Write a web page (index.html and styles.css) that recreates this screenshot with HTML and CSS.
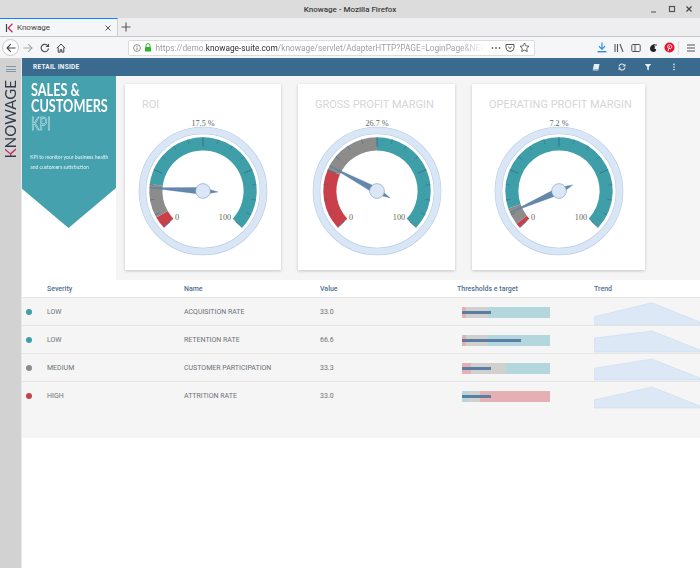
FILE: index.html
```html
<!DOCTYPE html>
<html>
<head>
    <title>Knowage - Mozilla Firefox</title>
    <link rel="stylesheet" href="styles.css">
</head>
<body>
    <div class="titlebar">
        <span class="titlebar-text">Knowage - Mozilla Firefox</span>
        <div class="window-buttons">
            <svg width="10" height="10" viewBox="0 0 10 10"><path d="M2 8h5" stroke="#666" stroke-width="1.2"/></svg>
            <svg width="10" height="10" viewBox="0 0 10 10"><rect x="2.5" y="2.5" width="5" height="5" fill="none" stroke="#555" stroke-width="1.2"/></svg>
            <svg width="10" height="10" viewBox="0 0 10 10"><path d="M2.5 2.5l5 5M7.5 2.5l-5 5" stroke="#444" stroke-width="1.2"/></svg>
        </div>
    </div>

    <div class="tabbar">
        <div class="tab">
            <svg class="favicon" width="9" height="10" viewBox="0 0 9 10"><path d="M1.5 1v8" stroke="#3a4658" stroke-width="1.2"/><path d="M7.5 .8L3.2 5l4.3 4.2" fill="none" stroke="#d0245f" stroke-width="1.2"/></svg>
            <span class="tab-title">Knowage</span>
            <svg width="8" height="8" viewBox="0 0 8 8"><path d="M1.5 1.5l5 5M6.5 1.5l-5 5" stroke="#555" stroke-width="1"/></svg>
        </div>
        <svg class="new-tab" width="10" height="10" viewBox="0 0 10 10"><path d="M5 .5v9M.5 5h9" stroke="#555" stroke-width="1.1"/></svg>
    </div>

    <div class="navbar">
        <div class="back-button">
            <svg width="10" height="10" viewBox="0 0 10 10"><path d="M9.5 5H1M4.8 1.2L1 5l3.8 3.8" fill="none" stroke="#444" stroke-width="1.1"/></svg>
        </div>
        <svg class="nav-icon" width="10" height="10" viewBox="0 0 10 10"><path d="M.5 5H9M5.2 1.2L9 5 5.2 8.8" fill="none" stroke="#aaa" stroke-width="1.1"/></svg>
        <svg class="nav-icon" width="10" height="10" viewBox="0 0 10 10"><path d="M8.5 5.5A3.7 3.7 0 1 1 7 2" fill="none" stroke="#444" stroke-width="1.1"/><path d="M9 .5v3.5H5.5z" fill="#444"/></svg>
        <svg class="nav-icon" width="10" height="10" viewBox="0 0 10 10"><path d="M.8 5.2L5 1l4.2 4.2M2.2 4.5v4.7h2v-2.5h1.6v2.5h2V4.5" fill="none" stroke="#444" stroke-width="1"/></svg>

        <div class="urlbar">
            <svg width="8" height="8" viewBox="0 0 8 8"><circle cx="4" cy="4" r="3.4" fill="none" stroke="#777" stroke-width=".8"/><path d="M4 3.4v2.6M4 1.8v.9" stroke="#777" stroke-width=".9"/></svg>
            <svg class="lock" width="8" height="9" viewBox="0 0 8 9"><path d="M2 4V2.6a2 2 0 0 1 4 0V4" fill="none" stroke="#2bb52b" stroke-width="1"/><rect x="1" y="4" width="6" height="4.6" rx=".6" fill="#2bb52b"/></svg>
            <div class="url-text">https://demo.<b>knowage-suite.com</b>/knowage/servlet/AdapterHTTP?PAGE=LoginPage&amp;NEW</div>
            <svg class="url-dots" width="10" height="4" viewBox="0 0 10 4"><circle cx="1.4" cy="2" r=".9" fill="#666"/><circle cx="5" cy="2" r=".9" fill="#666"/><circle cx="8.6" cy="2" r=".9" fill="#666"/></svg>
            <svg width="10" height="10" viewBox="0 0 10 10"><path d="M1 1.5h8v3a4 4 0 0 1-8 0z" fill="none" stroke="#555" stroke-width="1"/><path d="M3.2 3.8L5 5.5l1.8-1.7" fill="none" stroke="#555" stroke-width="1"/></svg>
            <svg width="11" height="11" viewBox="0 0 11 11"><path d="M5.5 1l1.4 2.9 3.1.4-2.3 2.2.6 3.1-2.8-1.5-2.8 1.5.6-3.1L1 4.3l3.1-.4z" fill="none" stroke="#555" stroke-width=".9"/></svg>
        </div>

        <div class="nav-right">
            <svg width="10" height="11" viewBox="0 0 10 11"><path d="M5 .5v6.5M2 4.3L5 7.2l3-2.9" fill="none" stroke="#2a90f0" stroke-width="1.2"/><path d="M.5 9.7h9" stroke="#2a90f0" stroke-width="1.4"/></svg>
            <svg width="10" height="10" viewBox="0 0 10 10"><path d="M1 1v8M3.5 1v8M6 1l3 8" fill="none" stroke="#555" stroke-width="1.1"/></svg>
            <svg width="10" height="10" viewBox="0 0 10 10"><rect x=".8" y="1.5" width="8.4" height="7" rx="1" fill="none" stroke="#555" stroke-width="1"/><path d="M4 1.5v7" stroke="#555" stroke-width="1"/></svg>
            <svg width="10" height="10" viewBox="0 0 10 10"><path d="M7.5 1.2C4.5 1 2 3 2 5.6 2 7.8 3.6 9 5.4 9c1.9 0 2.8-1.4 2.8-2.8L6.3 5.5 7.2 3.8 6.2 3z" fill="#222"/><circle cx="8" cy="2" r=".8" fill="#222"/></svg>
            <svg class="pin-icon" width="11" height="11" viewBox="0 0 11 11"><circle cx="5.5" cy="5.5" r="5" fill="#e8112d"/><path d="M4 9.2L5.4 4M3.6 5.6C3 3.8 4.3 2.8 5.7 2.8c1.5 0 2.3 1 2.1 2.3-.2 1.3-1.5 2-2.6 1.3" fill="none" stroke="#fff" stroke-width=".9"/></svg>
            <span class="nav-divider"></span>
            <svg width="10" height="10" viewBox="0 0 10 10"><path d="M1 2h8M1 5h8M1 8h8" stroke="#555" stroke-width="1"/></svg>
        </div>
    </div>

    <div class="app">
        <aside class="sidebar">
            <div class="burger"><span></span><span></span><span></span></div>
            <div class="brand"><span class="brand-k">K</span>NOWAGE</div>
        </aside>

        <main class="content">
            <header class="appbar">
                <span class="appbar-title">RETAIL INSIDE</span>
                <div class="appbar-icons">
                    <svg width="8" height="8" viewBox="0 0 8 8"><path d="M2 1h5.5L6.5 6.5H.8z" fill="#e6edf3"/><path d="M.8 6.5h5.7V7.6H.8z" fill="#b9c8d6"/></svg>
                    <svg width="8" height="8" viewBox="0 0 8 8"><path d="M1 3.4A3 3 0 0 1 6.4 2.3M7 4.6A3 3 0 0 1 1.6 5.7" fill="none" stroke="#e6edf3" stroke-width="1.1"/><path d="M7.4 .8v2.6H4.8zM.6 7.2V4.6h2.6z" fill="#e6edf3"/></svg>
                    <svg width="8" height="8" viewBox="0 0 8 8"><path d="M.8 1h6.4L4.8 4v3.4L3.2 6.4V4z" fill="#e6edf3"/></svg>
                    <svg width="8" height="8" viewBox="0 0 8 8"><circle cx="4" cy="1.4" r=".8" fill="#e6edf3"/><circle cx="4" cy="4" r=".8" fill="#e6edf3"/><circle cx="4" cy="6.6" r=".8" fill="#e6edf3"/></svg>
                </div>
            </header>

            <section class="dashboard">
                <div class="banner">
                    <div class="banner-inner">
                        <h1 class="banner-title">SALES &amp;<br>CUSTOMERS</h1>
                        <div class="banner-kpi">KPI</div>
                        <p class="banner-text">KPI to monitor your business health<br>and customers satisfaction</p>
                    </div>
                </div>
                <div class="gauges">
                    <div class="card card-roi">
                        <div class="card-title">ROI</div>
                        <svg class="gauge" width="150" height="150" viewBox="0 0 150 150" data-value="17.5" data-red="5" data-gray="19"></svg>
                    </div>
                    <div class="card card-gross">
                        <div class="card-title">GROSS PROFIT MARGIN</div>
                        <svg class="gauge" width="150" height="150" viewBox="0 0 150 150" data-value="26.7" data-red="25" data-gray="50"></svg>
                    </div>
                    <div class="card card-operating">
                        <div class="card-title">OPERATING PROFIT MARGIN</div>
                        <svg class="gauge" width="150" height="150" viewBox="0 0 150 150" data-value="7.2" data-red="2" data-gray="9"></svg>
                    </div>
                </div>
            </section>

            <section class="kpi-table">
                <div class="kpi-row kpi-head">
                    <span></span>
                    <span>Severity</span>
                    <span>Name</span>
                    <span>Value</span>
                    <span>Thresholds e target</span>
                    <span>Trend</span>
                </div>

                <div class="kpi-row">
                    <span class="dot dot-low"></span>
                    <span>LOW</span>
                    <span>ACQUISITION RATE</span>
                    <span>33.0</span>
                    <div class="bullet">
                        <i class="seg-red" style="width: 5%"></i><i class="seg-gray" style="width: 24%"></i><i class="seg-teal" style="width: 71%"></i>
                        <b class="measure" style="width: 33%"></b>
                    </div>
                    <svg class="spark" width="106" height="28" viewBox="0 0 106 28"><path d="M0 26.7V18.7L58 4.7 106 24V26.7z"/></svg>
                </div>

                <div class="kpi-row">
                    <span class="dot dot-low"></span>
                    <span>LOW</span>
                    <span>RETENTION RATE</span>
                    <span>66.6</span>
                    <div class="bullet">
                        <i class="seg-red" style="width: 5%"></i><i class="seg-gray" style="width: 24%"></i><i class="seg-teal" style="width: 71%"></i>
                        <b class="measure" style="width: 67%"></b>
                    </div>
                    <svg class="spark" width="106" height="28" viewBox="0 0 106 28"><path d="M0 26V12L58 5 106 24V26z"/></svg>
                </div>

                <div class="kpi-row">
                    <span class="dot dot-medium"></span>
                    <span>MEDIUM</span>
                    <span>CUSTOMER PARTICIPATION</span>
                    <span>33.3</span>
                    <div class="bullet">
                        <i class="seg-red" style="width: 10%"></i><i class="seg-gray" style="width: 40%"></i><i class="seg-teal" style="width: 50%"></i>
                        <b class="measure" style="width: 33.5%"></b>
                    </div>
                    <svg class="spark" width="106" height="28" viewBox="0 0 106 28"><path d="M0 26V14.3L58 5 106 24V26z"/></svg>
                </div>

                <div class="kpi-row">
                    <span class="dot dot-high"></span>
                    <span>HIGH</span>
                    <span>ATTRITION RATE</span>
                    <span>33.0</span>
                    <div class="bullet">
                        <i class="seg-teal" style="width: 8%"></i><i class="seg-gray" style="width: 13%"></i><i class="seg-red" style="width: 79%"></i>
                        <b class="measure" style="width: 33%"></b>
                    </div>
                    <svg class="spark" width="106" height="28" viewBox="0 0 106 28"><path d="M0 26V18L58 5 106 24V26z"/></svg>
                </div>
            </section>
        </main>
    </div>

    <script src="script.js"></script>
</body>
</html>
```

FILE: styles.css
```css
html, body {
    margin: 0;
    padding: 0;
}

body {
    width: 700px;
    height: 568px;
    overflow: hidden;
    background-color: #fff;
    font-family: "Roboto", sans-serif;
    display: flex;
    flex-direction: column;
}

svg {
    display: block;
    flex: none;
}

/* browser chrome */
.titlebar {
    height: 18px;
    flex: none;
    background-color: #dcdcdc;
    display: flex;
    align-items: center;
    justify-content: center;
    position: relative;
}

.titlebar-text {
    font-size: 8px;
    font-weight: 500;
    color: #3c3c3c;
}

.window-buttons {
    position: absolute;
    top: 4px;
    right: 6px;
    display: flex;
    gap: 7.5px;
}

.tabbar {
    height: 18px;
    flex: none;
    background-color: #eeeef0;
    border-bottom: 1px solid #c6c6c8;
    box-sizing: content-box;
    display: flex;
    align-items: center;
}

.tab {
    width: 118px;
    height: 18px;
    box-sizing: border-box;
    border-top: 1px solid #0a84ff;
    border-right: 1px solid #cfcfd1;
    background-color: #f5f6f7;
    display: flex;
    align-items: center;
    padding: 0 5px;
}

.tab-title {
    font-size: 8px;
    color: #444;
    margin-left: 3px;
    flex: 1;
}

.new-tab {
    margin-left: 3px;
}

.navbar {
    height: 21px;
    flex: none;
    background-color: #f5f6f7;
    display: flex;
    align-items: center;
    box-sizing: border-box;
}

.back-button {
    width: 17px;
    height: 17px;
    margin-left: 2px;
    box-sizing: border-box;
    border: 1px solid #c9c9cb;
    border-radius: 50%;
    background-color: #fff;
    display: flex;
    align-items: center;
    justify-content: center;
}

.nav-icon {
    margin-left: 6.5px;
}

.navbar .back-button + .nav-icon {
    margin-left: 4px;
}

.urlbar {
    width: 407px;
    height: 16px;
    box-sizing: border-box;
    margin-left: 61.5px;
    border: 1px solid #dcdcdf;
    border-radius: 2px;
    background-color: #fff;
    display: flex;
    align-items: center;
    padding: 0 2px 0 4px;
    gap: 4px;
}

.lock {
    margin-left: -1px;
}

.url-text {
    width: 329px;
    font-size: 8.3px;
    white-space: nowrap;
    overflow: hidden;
    color: #a0a0a4;
    -webkit-mask-image: linear-gradient(to right, #000 92%, transparent 100%);
}

.url-text b {
    font-weight: 400;
    color: #303036;
}

.url-dots {
    margin-left: 2px;
}

.nav-right {
    margin-left: 62px;
    display: flex;
    align-items: center;
    gap: 7px;
}

.pin-icon {
    margin-left: -1px;
}

.nav-divider {
    width: 1px;
    height: 14px;
    margin-left: -4px;
    background-color: #dddde0;
}

/* app */
.app {
    flex: 1;
    display: flex;
    min-height: 0;
}

.sidebar {
    width: 21px;
    flex: none;
    background-color: #d2d2d2;
    border-right: 1px solid #e9e9e9;
    box-sizing: content-box;
    display: flex;
    flex-direction: column;
    align-items: center;
}

.burger {
    margin-top: 8px;
    width: 10px;
}

.burger span {
    display: block;
    height: 1px;
    margin-bottom: 1.5px;
    background-color: #7f97ab;
}

.brand {
    margin-top: 6px;
    writing-mode: vertical-rl;
    transform: rotate(180deg);
    font-family: "Lato", sans-serif;
    font-size: 15px;
    line-height: 15px;
    letter-spacing: 0.1px;
    color: #2f3a4c;
}

.brand-k {
    color: transparent;
    background: linear-gradient(to bottom, #2f3a4c 26%, #c02a5c 26%);
    -webkit-background-clip: text;
    background-clip: text;
}

.content {
    flex: 1;
    min-width: 0;
    overflow: hidden;
}

.appbar {
    height: 18px;
    margin-left: -1px;
    background-color: #3b6a8f;
    display: flex;
    align-items: center;
    justify-content: space-between;
    padding: 0 22px 0 12px;
}

.appbar-title {
    font-size: 6.5px;
    font-weight: 700;
    letter-spacing: 0.25px;
    color: #f0f4f7;
}

.appbar-icons {
    display: flex;
    gap: 18px;
}

.dashboard {
    height: 204px;
    display: flex;
    background: linear-gradient(to right, #fff 94px, #f5f5f5 94px);
}

.banner {
    width: 95px;
    height: 152px;
    margin-left: -1px;
    box-sizing: border-box;
    flex: none;
    padding: 6px 0 0 10px;
    background-color: #45a1ad;
    color: #fff;
    clip-path: polygon(0 0, 100% 0, 100% 112px, 50% 100%, 0 112px);
}

/* the original face is a narrow one */
.banner-inner {
    width: 112px;
    transform: scaleX(0.77);
    transform-origin: left top;
    white-space: nowrap;
}

.banner-title {
    margin: 0;
    font-family: "Lato", sans-serif;
    font-size: 16.5px;
    font-weight: 700;
    line-height: 16px;
}

.banner-kpi {
    margin-top: 2px;
    font-family: "Lato", sans-serif;
    font-size: 16.5px;
    line-height: 16px;
    color: transparent;
    -webkit-text-stroke: 0.5px #e4f2f4;
}

.banner-text {
    margin: 20px 0 0 -1px;
    font-family: "Lato", sans-serif;
    font-size: 6.5px;
    line-height: 10px;
    color: #e8f4f5;
}

.gauges {
    display: flex;
    gap: 17px;
    padding: 8px 0 0 9px;
}

.card {
    height: 186px;
    box-sizing: border-box;
    padding: 13px 0 0 17px;
    background-color: #fff;
    box-shadow: 0 1px 3px rgba(0, 0, 0, 0.2);
}

.card-roi {
    width: 156px;
}

.card-gross {
    width: 157px;
}

.card-operating {
    width: 173px;
}

.card-title {
    font-size: 11px;
    line-height: 16px;
    color: #d6d6d6;
    white-space: nowrap;
}

.gauge {
    margin-top: 2px;
    margin-left: calc((100% - 150px) / 2 - 8.5px);
}

.gauge text {
    font-family: "Liberation Serif", serif;
    font-size: 8.2px;
    fill: #666;
}

/* table */
.kpi-table {
    padding-bottom: 28px;
    background-color: #f5f5f5;
}

.kpi-row {
    height: 28px;
    box-sizing: border-box;
    display: grid;
    grid-template-columns: 25px 137px 136px 137px 137px 106px;
    align-items: center;
    border-bottom: 1px solid #e6e6e6;
    font-size: 7px;
    color: #6c7076;
}

.kpi-row:last-child {
    border-bottom: 0;
}

.kpi-head {
    height: 18px;
    background-color: #fff;
    font-weight: 500;
    color: #4f6f94;
}

.dot {
    width: 6px;
    height: 6px;
    margin-left: 4px;
    border-radius: 50%;
}

.dot-low {
    background-color: #3f9fac;
}

.dot-medium {
    background-color: #8c8c8a;
}

.dot-high {
    background-color: #c9404a;
}

.bullet {
    position: relative;
    display: flex;
    width: 88px;
    height: 11px;
    margin-left: 5px;
}

.bullet i {
    display: block;
    height: 100%;
}

.seg-red {
    background-color: #e5b0b3;
}

.seg-gray {
    background-color: #d0d0ce;
}

.seg-teal {
    background-color: #b3d7dd;
}

.measure {
    position: absolute;
    top: 4px;
    left: 0;
    height: 3px;
    background-color: #5a7ea3;
}

.spark {
    align-self: start;
}

.spark path {
    fill: #dce8f5;
    stroke: #cddcef;
    stroke-width: 0.6;
}
```

FILE: script.js
```js
// gauges: value goes from -133deg to 133deg, 0 is on top
var CX = 75;
var CY = 76;
var NS = 'http://www.w3.org/2000/svg';

function angleOf(value) {
    return -133 + value * 2.66;
}

function point(angle, r) {
    var rad = angle * Math.PI / 180;
    return (CX + r * Math.sin(rad)).toFixed(2) + ' ' + (CY - r * Math.cos(rad)).toFixed(2);
}

function add(svg, tag, attrs, text) {
    var el = document.createElementNS(NS, tag);
    for (var key in attrs) {
        el.setAttribute(key, attrs[key]);
    }
    if (text) {
        el.textContent = text;
    }
    svg.appendChild(el);
}

function band(svg, from, to, color) {
    var a = angleOf(from);
    var b = angleOf(to);
    var large = b - a > 180 ? 1 : 0;
    var d = 'M' + point(a, 53.7) +
        'A53.7 53.7 0 ' + large + ' 1 ' + point(b, 53.7) +
        'L' + point(b, 40.6) +
        'A40.6 40.6 0 ' + large + ' 0 ' + point(a, 40.6) + 'Z';
    add(svg, 'path', { d: d, fill: color });
}

function drawGauge(svg) {
    var value = parseFloat(svg.dataset.value);
    var red = parseFloat(svg.dataset.red);
    var gray = parseFloat(svg.dataset.gray);

    add(svg, 'circle', { cx: CX, cy: CY, r: 60.5, fill: 'none', stroke: '#b4c9e2', 'stroke-width': 7.6 });
    add(svg, 'circle', { cx: CX, cy: CY, r: 60.5, fill: 'none', stroke: '#d8e6f6', 'stroke-width': 6.6 });

    band(svg, 0, red, '#c9404a');
    band(svg, red, gray, '#8c8c8a');
    band(svg, gray, 100, '#3f9fa9');

    for (var i = 0; i <= 16; i++) {
        var a = angleOf(i * 6.25);
        var inner = i % 4 === 0 ? 44.5 : 49;
        add(svg, 'path', {
            d: 'M' + point(a, 53.7) + 'L' + point(a, inner),
            stroke: '#3b6a8f',
            'stroke-width': i % 4 === 0 ? 0.9 : 0.6
        });
    }

    add(svg, 'text', { x: CX, y: 11, 'text-anchor': 'middle' }, value.toFixed(1) + ' %');
    add(svg, 'text', { x: CX - 26, y: CY + 29, 'text-anchor': 'middle' }, '0');
    add(svg, 'text', { x: CX + 22, y: CY + 29, 'text-anchor': 'middle' }, '100');

    var na = angleOf(value);
    add(svg, 'path', {
        d: 'M' + point(na, 54) + 'L' + point(na + 90, 3.5) + 'L' + point(na + 180, 15) + 'L' + point(na - 90, 3.5) + 'Z',
        fill: '#6388ab',
        stroke: '#4f7396',
        'stroke-width': 0.3
    });
    add(svg, 'circle', { cx: CX, cy: CY, r: 7.4, fill: '#dbe7f6', stroke: '#7c9dc0', 'stroke-width': 0.6 });
}

var gauges = document.querySelectorAll('.gauge');
for (var g = 0; g < gauges.length; g++) {
    drawGauge(gauges[g]);
}
```
